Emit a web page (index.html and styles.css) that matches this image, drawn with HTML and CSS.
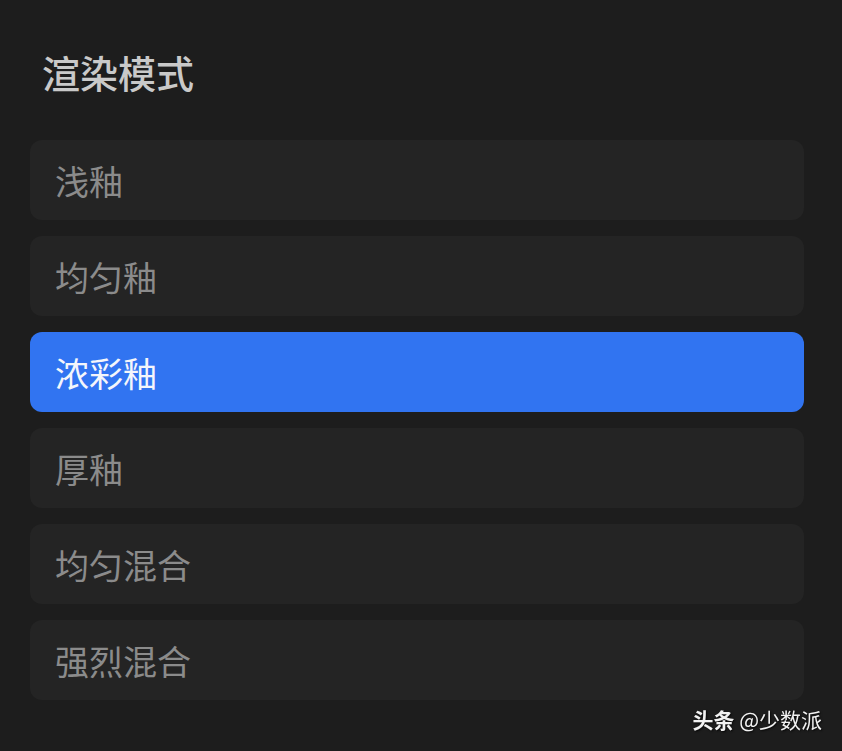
FILE: index.html
```html
<!DOCTYPE html>
<html lang="zh-CN">
<head>
  <meta charset="UTF-8">
  <meta name="viewport" content="width=device-width, initial-scale=1">
  <title>渲染模式</title>
  <link rel="stylesheet" href="styles.css">
</head>
<body>

  <div class="panel">
    <h2 class="panel-title">渲染模式</h2>
    <ul class="mode-list">
      <li class="mode-item">浅釉</li>
      <li class="mode-item">均匀釉</li>
      <li class="mode-item active">浓彩釉</li>
      <li class="mode-item">厚釉</li>
      <li class="mode-item">均匀混合</li>
      <li class="mode-item">强烈混合</li>
    </ul>
  </div>

  <!-- watermark -->
  <div class="watermark"><b>头条</b> @少数派</div>

</body>
</html>
```

FILE: styles.css
```css
html, body {
  height: 100%;
}

body {
  font-family: "Noto Sans CJK SC", "Noto Sans", sans-serif;
  background-color: #1d1d1d;
  margin: 0;
  padding: 0;
  overflow: hidden;
}

.panel {
  padding: 44px 38px 0 30px;
}

.panel-title {
  margin: 0 0 40px 12px;
  font-size: 38px;
  line-height: 56px;
  font-weight: 500;
  color: #c9c9c9;
}

.mode-list {
  list-style: none;
  margin: 0;
  padding: 0;
  display: flex;
  flex-direction: column;
  gap: 16px;
}

.mode-item {
  height: 80px;
  display: flex;
  align-items: center;
  padding-left: 25px;
  border-radius: 12px;
  background-color: #242424;
  color: #8b8b8b;
  font-size: 34px;
  cursor: pointer;
}

.mode-item.active {
  background-color: #3174f1;
  color: #f4f6fb;
}

.watermark {
  position: fixed;
  right: 20px;
  bottom: 17px;
  font-size: 21px;
  color: #f2f2f2;
  text-shadow: 1px 1px 2px rgba(0, 0, 0, 0.8);
}

.watermark b {
  font-weight: 700;
}
```
